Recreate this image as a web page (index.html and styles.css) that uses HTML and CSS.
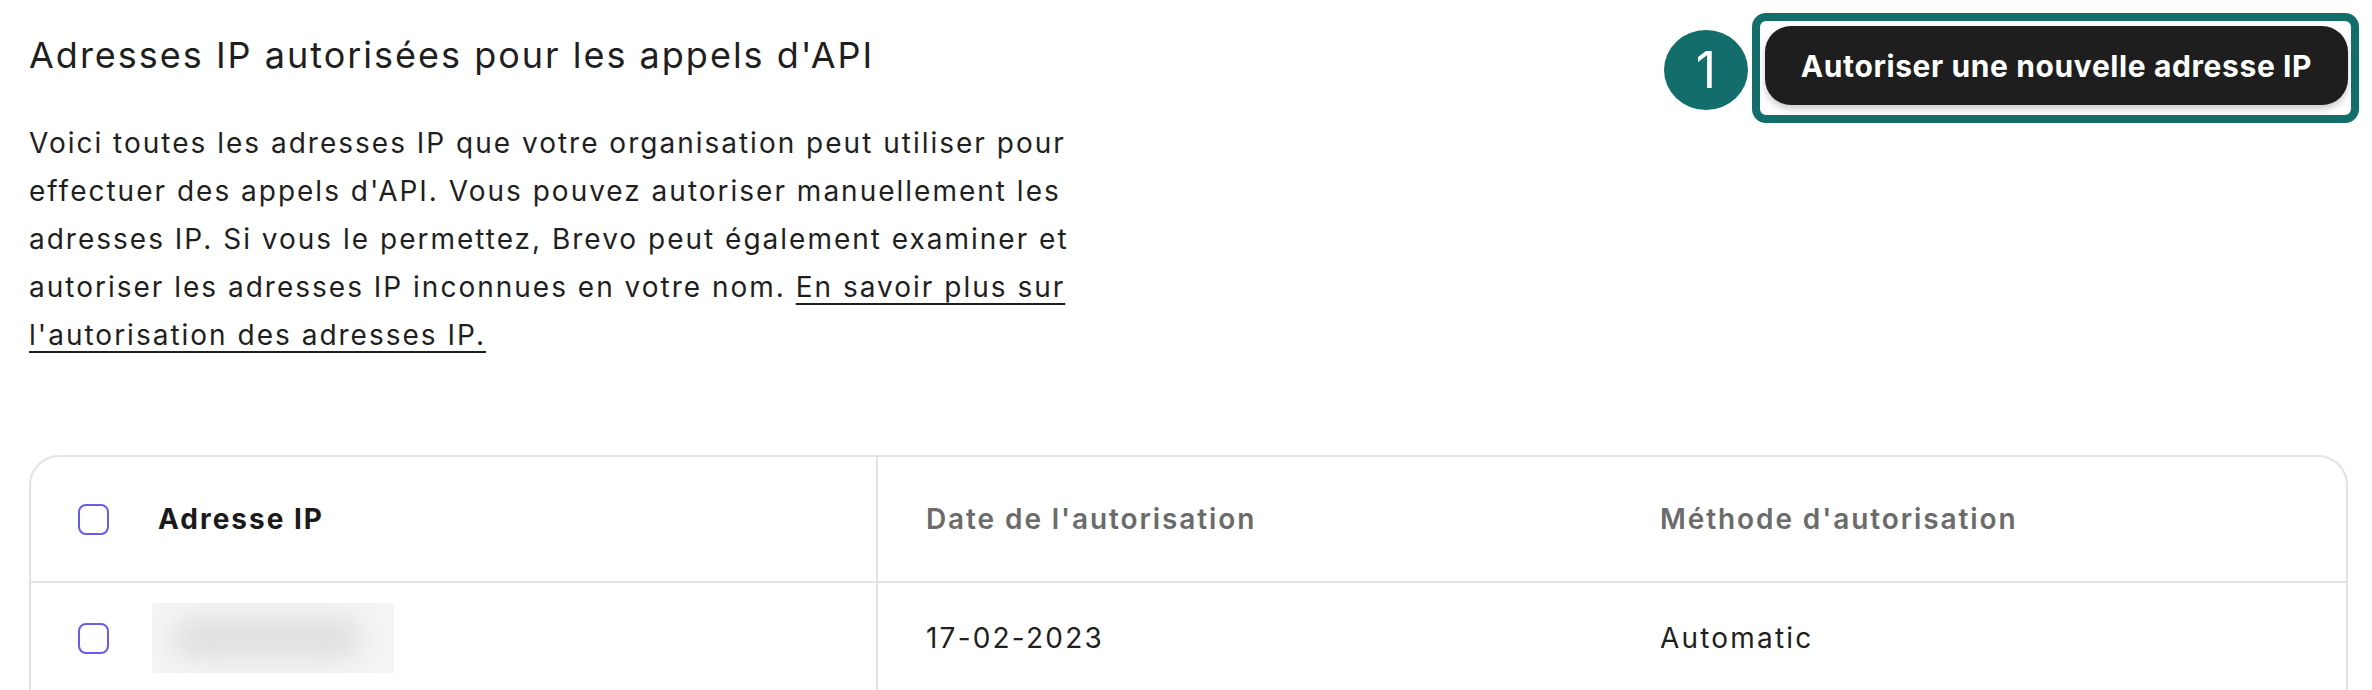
FILE: index.html
```html
<!DOCTYPE html>
<html lang="fr">
<head>
<meta charset="utf-8">
<title>Adresses IP autorisées</title>
<link rel="stylesheet" href="styles.css">
</head>
<body>
<div class="page">
  <header class="top">
    <div class="intro">
      <h1 class="title">Adresses IP autorisées pour les appels d'API</h1>
      <p class="desc">Voici toutes les adresses IP que votre organisation peut utiliser pour effectuer des appels d'API. Vous pouvez autoriser manuellement les adresses IP. Si vous le permettez, Brevo peut également examiner et autoriser les adresses IP inconnues en votre nom. <a class="link" href="#">En savoir plus sur l'autorisation des adresses IP.</a></p>
    </div>
    <div class="actions">
      <span class="step">1</span>
      <div class="highlight">
        <button class="btn-primary" type="button">Autoriser une nouvelle adresse IP</button>
      </div>
    </div>
  </header>

  <div class="table">
    <div class="row head">
      <div class="cell first">
        <span class="check"></span>
        <span class="th-main">Adresse IP</span>
      </div>
      <div class="cell"><span class="th">Date de l'autorisation</span></div>
      <div class="cell"><span class="th">Méthode d'autorisation</span></div>
    </div>
    <div class="row body-row">
      <div class="cell first">
        <div class="cell-line">
          <span class="check"></span>
          <span class="blurred"><span class="blur-core"></span></span>
        </div>
      </div>
      <div class="cell"><div class="cell-line"><span class="td">17-02-2023</span></div></div>
      <div class="cell"><div class="cell-line"><span class="td">Automatic</span></div></div>
    </div>
  </div>
</div>
</body>
</html>
```

FILE: styles.css
```css
* { box-sizing: border-box; }
html, body { margin: 0; padding: 0; background: #ffffff; }
body {
  font-family: Inter, "Noto Sans", "Liberation Sans", sans-serif;
  color: #1f1f1f;
  overflow: hidden;
}
.page {
  padding: 13px 24px 0 29px;
}
.top {
  display: flex;
  justify-content: space-between;
  align-items: flex-start;
}
.intro {
  width: 1085px;
  padding-top: 20px;
}
.title {
  margin: 0;
  font-size: 36px;
  line-height: 44px;
  font-weight: 400;
  letter-spacing: 2px;
  color: #1f1f1f;
}
.desc {
  margin: 42px 0 0;
  font-size: 28px;
  line-height: 48px;
  font-weight: 400;
  letter-spacing: 2px;
  color: #1f1f1f;
}
.link {
  color: #1f1f1f;
  text-decoration: underline;
  text-underline-offset: 6px;
  text-decoration-thickness: 2px;
}
.actions {
  display: flex;
  align-items: center;
  gap: 4px;
  margin-right: -11px;
}
.step {
  width: 84px;
  height: 80px;
  border-radius: 50%;
  background: #136d6b;
  color: #ffffff;
  display: flex;
  align-items: center;
  justify-content: center;
  font-size: 50px;
  font-weight: 400;
  margin-top: 4px;
}
.highlight {
  border: 8px solid #136d6b;
  border-radius: 14px;
  padding: 5px 3px 10px 5px;
  background: #ffffff;
}
.btn-primary {
  display: block;
  width: 583px;
  height: 79px;
  border: none;
  border-radius: 26px;
  background: #1e1e1e;
  color: #ffffff;
  font-family: Inter, "Noto Sans", "Liberation Sans", sans-serif;
  font-size: 30px;
  font-weight: 700;
  letter-spacing: 0.6px;
  box-shadow: 0 4px 7px rgba(0, 0, 0, 0.2);
}
.table {
  margin-top: 96px;
  border: 2px solid #e3e3e3;
  border-bottom: none;
  border-radius: 30px 30px 0 0;
}
.row {
  display: grid;
  grid-template-columns: 847px 1fr 1fr;
}
.head {
  height: 126px;
  border-bottom: 2px solid #e3e3e3;
}
.body-row {
  height: 107px;
}
.cell {
  display: flex;
  align-items: center;
  padding-left: 48px;
}
.body-row .cell {
  align-items: flex-start;
}
.cell-line {
  height: 107px;
  padding-top: 3px;
  display: flex;
  align-items: center;
  gap: 43px;
}
.cell.first {
  border-right: 2px solid #e3e3e3;
  padding-left: 47px;
  gap: 49px;
}
.check {
  width: 31px;
  height: 31px;
  border: 2px solid #6a5ce6;
  border-radius: 8px;
  flex: none;
}
.th-main {
  font-size: 28px;
  font-weight: 700;
  letter-spacing: 2px;
  color: #1a1a1a;
}
.th {
  font-size: 28px;
  font-weight: 600;
  letter-spacing: 1.9px;
  color: #6b6b6b;
}
.td {
  font-size: 28px;
  font-weight: 400;
  letter-spacing: 2.2px;
  color: #1f1f1f;
}
.blurred {
  position: relative;
  width: 242px;
  height: 70px;
  background: #f5f5f5;
  overflow: hidden;
}
.blur-core {
  position: absolute;
  left: 20px;
  top: 15px;
  width: 190px;
  height: 40px;
  border-radius: 20px;
  background: #dedede;
  filter: blur(14px);
}
```
